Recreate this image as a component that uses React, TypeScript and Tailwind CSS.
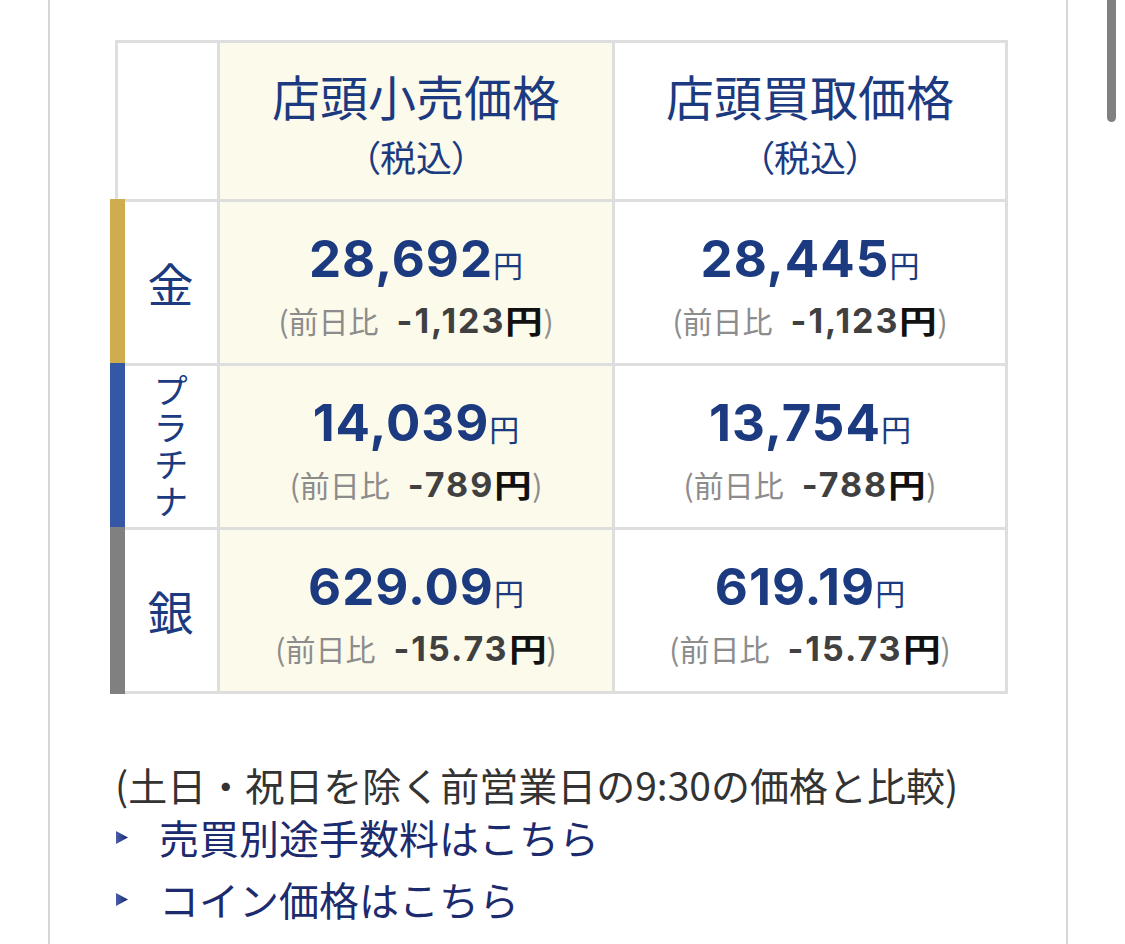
import React from "react";

const NAVY = "text-[#1b3a80]";
const JP = '"Noto Sans CJK JP", sans-serif';

function Sub({ diff }: { diff: string }) {
  return (
    <div className="h-[48px] leading-[48px] whitespace-nowrap">
      <span className="text-[30px] text-[#8c8c8c]" style={{ fontFamily: JP }}>(前日比</span>
      <span className="ml-[18px] text-[34px] font-bold text-[#404040] tracking-[2px]" style={{ fontFamily: 'Inter, sans-serif' }}>{diff}</span>
      <span className="inline-block origin-left scale-x-[1.18] mr-[6px] text-[32px] font-bold text-[#111111]" style={{ fontFamily: JP }}>円</span>
      <span className="text-[30px] text-[#8c8c8c]" style={{ fontFamily: JP }}>)</span>
    </div>
  );
}

function PriceCell({ price, diff, cream }: { price: string; diff: string; cream?: boolean }) {
  return (
    <div className={`flex flex-col items-center justify-center ${cream ? "bg-[#fcfaeb]" : "bg-white"}`}>
      <div className={`h-[72px] leading-[72px] whitespace-nowrap ${NAVY}`}>
        <span className="text-[51px] font-bold tracking-[1px]" style={{ fontFamily: 'Inter, sans-serif' }}>{price}</span>
        <span className="text-[30px]" style={{ fontFamily: JP }}>円</span>
      </div>
      <Sub diff={diff} />
    </div>
  );
}

function Label({ children, bar, last }: { children: React.ReactNode; bar: string; last?: boolean }) {
  return (
    <div className="relative flex items-center justify-center bg-white pl-[6px]">
      <div className={`absolute left-[-8px] top-[-3px] w-[15px] ${last ? "bottom-[-3px]" : "bottom-0"} ${bar}`} />
      {children}
    </div>
  );
}

function Arrow() {
  return (
    <svg width="15" height="15" viewBox="0 0 15 15" className="shrink-0">
      <defs>
        <linearGradient id="ag" x1="0" y1="0" x2="1" y2="0">
          <stop offset="0" stopColor="#4a5fa8" />
          <stop offset="1" stopColor="#142577" />
        </linearGradient>
      </defs>
      <polygon points="1,1 13,7.5 1,14" fill="url(#ag)" />
    </svg>
  );
}

export default function App() {
  return (
    <div className="relative w-[1125px] h-[944px] overflow-hidden bg-white" style={{ fontFamily: JP }}>
      <div className="ml-[48px] w-[1020px] h-[944px] border-l-[2px] border-r-[2px] border-[#d6d6d6] pl-[65px] pt-[40px]">
        <div className="grid w-[893px] grid-cols-[99px_392px_390px] grid-rows-[156px_161px_161px_161px] gap-[3px] p-[3px] bg-[#dedede]">
          <div className="bg-white" />
          <div className={`flex flex-col items-center justify-center bg-[#fcfaeb] ${NAVY}`}>
            <div className="text-[48px] leading-[70px]">店頭小売価格</div>
            <div className="text-[36px] leading-[52px] [font-feature-settings:'palt']">（税込）</div>
          </div>
          <div className={`flex flex-col items-center justify-center bg-white ${NAVY}`}>
            <div className="text-[48px] leading-[70px]">店頭買取価格</div>
            <div className="text-[36px] leading-[52px] [font-feature-settings:'palt']">（税込）</div>
          </div>

          <Label bar="bg-[#cfad4f]">
            <span className={`text-[46px] ${NAVY}`}>金</span>
          </Label>
          <PriceCell price="28,692" diff="-1,123" cream />
          <PriceCell price="28,445" diff="-1,123" />

          <Label bar="bg-[#3458a6]">
            <span className={`[writing-mode:vertical-rl] text-[35px] leading-[40px] tracking-[2px] ${NAVY}`}>プラチナ</span>
          </Label>
          <PriceCell price="14,039" diff="-789" cream />
          <PriceCell price="13,754" diff="-788" />

          <Label bar="bg-[#808080]" last>
            <span className={`text-[46px] ${NAVY}`}>銀</span>
          </Label>
          <PriceCell price="629.09" diff="-15.73" cream />
          <PriceCell price="619.19" diff="-15.73" />
        </div>

        <div className="mt-[62px] text-[39px] leading-[56px] text-[#333333] whitespace-nowrap">(土日・祝日を除く前営業日の9:30の価格と比較)</div>
        <div className="flex flex-col">
          <div className="flex items-center h-[58px] mt-[-4px]">
            <Arrow />
            <span className="ml-[29px] text-[40px] text-[#1c2a6e] whitespace-nowrap">売買別途手数料はこちら</span>
          </div>
          <div className="flex items-center h-[66px]">
            <Arrow />
            <span className="ml-[29px] text-[40px] text-[#1c2a6e] whitespace-nowrap">コイン価格はこちら</span>
          </div>
        </div>
      </div>
      <div className="absolute right-[9px] top-0 h-[122px] w-[9px] rounded-b-full bg-[#808080]" />
    </div>
  );
}
